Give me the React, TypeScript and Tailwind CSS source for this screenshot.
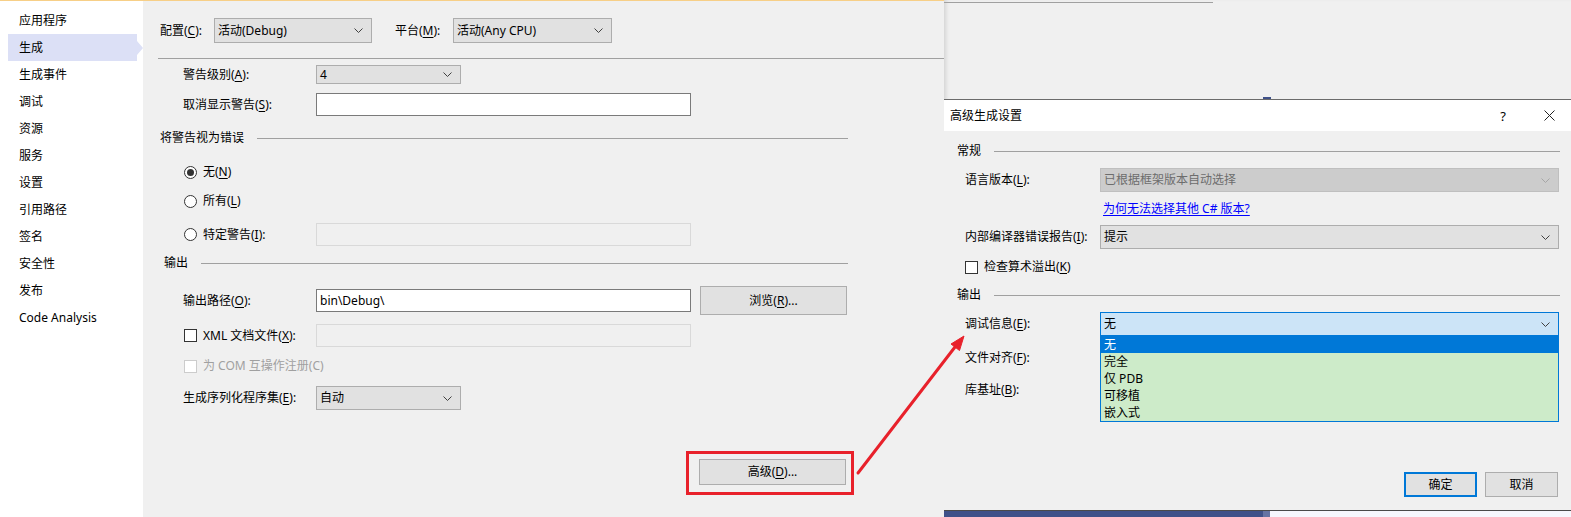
import type { ReactNode } from "react";
import clsx from "clsx";

const navItems = ["应用程序", "生成", "生成事件", "调试", "资源", "服务", "设置", "引用路径", "签名", "安全性", "发布", "Code Analysis"];

const U = ({ children }: { children: ReactNode }) => <span className="underline underline-offset-2">{children}</span>;

function Chevron({ color = "#404040" }: { color?: string }) {
    return (
        <svg width="9" height="5" viewBox="0 0 9 5" className="shrink-0">
            <path d="M0.5 0.5 L4.5 4.5 L8.5 0.5" fill="none" stroke={color} strokeWidth="1" />
        </svg>
    );
}

function Select({ children, className, disabled, focused }: { children?: ReactNode; className?: string; disabled?: boolean; focused?: boolean }) {
    return (
        <div
            className={clsx(
                "flex shrink-0 items-center justify-between border pl-[3px] pr-[8px]",
                disabled ? "border-[#bfbfbf] bg-[#cccccc] text-[#6d6d6d]" : focused ? "border-[#0078d7] bg-[#cce4f7]" : "border-[#adadad] bg-[#e1e1e1]",
                className
            )}
        >
            <span>{children}</span>
            <Chevron color={disabled ? "#a6a6a6" : "#404040"} />
        </div>
    );
}

function Input({ value, disabled, className }: { value?: string; disabled?: boolean; className?: string }) {
    return (
        <div
            className={clsx(
                "flex h-[23px] w-[375px] shrink-0 items-center border pl-[3px]",
                disabled ? "border-[#d9d9d9] bg-[#f0f0f0]" : "border-[#7a7a7a] bg-white",
                className
            )}
        >
            {value}
        </div>
    );
}

function Button({ children, primary, className }: { children: ReactNode; primary?: boolean; className?: string }) {
    return (
        <div
            className={clsx(
                "flex shrink-0 items-center justify-center bg-[#e1e1e1]",
                primary ? "border-2 border-[#0078d7]" : "border border-[#adadad]",
                className
            )}
        >
            {children}
        </div>
    );
}

function Radio({ checked }: { checked?: boolean }) {
    return (
        <div className="flex h-[13px] w-[13px] shrink-0 items-center justify-center rounded-full border border-[#333] bg-white">
            {checked ? <div className="h-[7px] w-[7px] rounded-full bg-[#333]" /> : null}
        </div>
    );
}

function Checkbox({ disabled }: { disabled?: boolean }) {
    return <div className={clsx("h-[13px] w-[13px] shrink-0 border bg-white", disabled ? "border-[#cccccc]" : "border-[#333]")} />;
}

function GroupHeader({ title, className }: { title: string; className?: string }) {
    return (
        <div className={clsx("flex h-4 items-center", className)}>
            <span>{title}</span>
            <div className="ml-[13px] h-px flex-1 bg-[#a0a0a0]" />
        </div>
    );
}

function Sidebar() {
    return (
        <aside className="flex w-[143px] shrink-0 flex-col bg-white pt-[6px]">
            {navItems.map((item) => (
                <div key={item} className="flex h-[27px] items-center pl-[8px]">
                    {item === "生成" ? (
                        <>
                            <div className="flex h-full w-[129px] items-center bg-[#dce0f6] pl-[11px]">{item}</div>
                            <div className="h-0 w-0 border-y-[7px] border-l-[6px] border-y-transparent border-l-[#dce0f6]" />
                        </>
                    ) : (
                        <div className="pl-[11px]">{item}</div>
                    )}
                </div>
            ))}
        </aside>
    );
}

function BuildPage() {
    return (
        <main className="flex w-[801px] shrink-0 flex-col bg-[#f0f0f0]">
            <div className="mt-[17px] flex h-[25px] items-center pl-[17px]">
                <span className="w-[54px]">配置(<U>C</U>):</span>
                <Select className="h-[25px] w-[158px]">活动(Debug)</Select>
                <span className="ml-[23px] w-[58px]">平台(<U>M</U>):</span>
                <Select className="h-[25px] w-[159px]">活动(Any CPU)</Select>
            </div>
            <div className="ml-[15px] mt-[15px] h-px bg-[#a0a0a0]" />

            <div className="flex flex-col pl-[40px]">
                <div className="mt-[6px] flex h-[19px] items-center">
                    <span className="w-[133px]">警告级别(<U>A</U>):</span>
                    <Select className="h-[19px] w-[145px]">4</Select>
                </div>
                <div className="mt-[9px] flex h-[23px] items-center">
                    <span className="w-[133px]">取消显示警告(<U>S</U>):</span>
                    <Input />
                </div>
            </div>

            <GroupHeader title="将警告视为错误" className="mt-[14px] pl-[17px] pr-[96px]" />

            <div className="flex flex-col pl-[41px]">
                <div className="mt-[18px] flex h-4 items-center gap-[6px]">
                    <Radio checked />
                    <span>无(<U>N</U>)</span>
                </div>
                <div className="mt-[13px] flex h-4 items-center gap-[6px]">
                    <Radio />
                    <span>所有(<U>L</U>)</span>
                </div>
                <div className="mt-[14px] flex h-[23px] items-center">
                    <div className="flex w-[132px] items-center gap-[6px]">
                        <Radio />
                        <span>特定警告(<U>I</U>):</span>
                    </div>
                    <Input disabled />
                </div>
            </div>

            <GroupHeader title="输出" className="mt-[9px] pl-[21px] pr-[96px]" />

            <div className="flex flex-col pl-[40px]">
                <div className="mt-[15px] flex h-[29px] items-center">
                    <span className="w-[133px]">输出路径(<U>O</U>):</span>
                    <Input value="bin\Debug\" />
                    <Button className="ml-[9px] h-[29px] w-[147px]">
                        浏览(<U>R</U>)...
                    </Button>
                </div>
                <div className="mt-[9px] flex h-[23px] items-center">
                    <div className="flex w-[133px] items-center gap-[6px] pl-px">
                        <Checkbox />
                        <span>XML 文档文件(<U>X</U>):</span>
                    </div>
                    <Input disabled />
                </div>
                <div className="mt-[11px] flex h-4 items-center gap-[6px] pl-px text-[#a0a0a0]">
                    <Checkbox disabled />
                    <span>为 COM 互操作注册(C)</span>
                </div>
                <div className="mt-[12px] flex h-[24px] items-center">
                    <span className="w-[133px]">生成序列化程序集(<U>E</U>):</span>
                    <Select className="h-[24px] w-[145px]">自动</Select>
                </div>
            </div>

            <div className="ml-[543px] mt-[41px] w-[168px] border-[3px] border-[#e8212b] pb-[7px] pl-[10px] pt-[5px]">
                <Button className="h-[26px] w-[147px]">
                    高级(<U>D</U>)...
                </Button>
            </div>
        </main>
    );
}

function AdvancedDialog() {
    return (
        <section className="flex h-[411px] flex-col border-t border-[#6b6b6b]">
            <div className="flex h-[31px] items-center bg-white pl-[6px] pr-[16px]">
                <span className="flex-1">高级生成设置</span>
                <span className="mr-[38px] text-[13px]">?</span>
                <svg width="11" height="11" viewBox="0 0 11 11">
                    <path d="M0.5 0.5 L10.5 10.5 M10.5 0.5 L0.5 10.5" stroke="#222" strokeWidth="1" />
                </svg>
            </div>
            <div className="flex flex-1 flex-col bg-[#f0f0f0]">
                <GroupHeader title="常规" className="mt-[12px] pl-[13px] pr-[11px]" />
                <div className="flex flex-col pl-[21px] pr-[12px]">
                    <div className="mt-[9px] flex h-[24px] items-center">
                        <span className="w-[135px] shrink-0">语言版本(<U>L</U>):</span>
                        <Select disabled className="h-[24px] flex-1">已根据框架版本自动选择</Select>
                    </div>
                    <div className="mt-[9px] flex h-4 items-center pl-[138px]">
                        <span className="text-[#0000ff] underline underline-offset-2">为何无法选择其他 C# 版本?</span>
                    </div>
                    <div className="mt-[8px] flex h-[24px] items-center">
                        <span className="w-[135px] shrink-0">内部编译器错误报告(<U>I</U>):</span>
                        <Select className="h-[24px] flex-1">提示</Select>
                    </div>
                    <div className="mt-[10px] flex h-4 items-center gap-[6px]">
                        <Checkbox />
                        <span>检查算术溢出(<U>K</U>)</span>
                    </div>
                </div>
                <GroupHeader title="输出" className="mt-[12px] pl-[13px] pr-[11px]" />
                <div className="flex flex-col pl-[21px] pr-[12px]">
                    <div className="mt-[9px] flex h-[24px] items-center">
                        <span className="w-[135px] shrink-0">调试信息(<U>E</U>):</span>
                        <div className="relative flex-1">
                            <Select focused className="h-[24px] w-full">无</Select>
                            <ul className="absolute left-0 right-0 top-[24px] z-10 border border-t-0 border-[#0078d7] bg-[#cdebc9]">
                                {["无", "完全", "仅 PDB", "可移植", "嵌入式"].map((item, i) => (
                                    <li key={item} className={clsx("flex h-[17px] items-center pl-[3px]", i === 0 && "bg-[#0078d7] text-white")}>
                                        {item}
                                    </li>
                                ))}
                            </ul>
                        </div>
                    </div>
                    <div className="mt-[10px] flex h-[24px] items-center">
                        <span className="w-[135px] shrink-0">文件对齐(<U>F</U>):</span>
                        <Select className="h-[24px] flex-1" />
                    </div>
                    <div className="mt-[8px] flex h-[24px] items-center">
                        <span className="w-[135px] shrink-0">库基址(<U>B</U>):</span>
                        <div className="h-[24px] flex-1 border border-[#7a7a7a] bg-white" />
                    </div>
                </div>
                <div className="mt-[70px] flex justify-end gap-[8px] pr-[13px]">
                    <Button primary className="h-[25px] w-[73px]">确定</Button>
                    <Button className="h-[25px] w-[73px]">取消</Button>
                </div>
            </div>
        </section>
    );
}

export default function App() {
    return (
        <div className="relative flex h-[517px] w-[1571px] overflow-hidden bg-[#f0f0f0] font-['Noto_Sans','Noto_Sans_CJK_SC',sans-serif] text-[12px] leading-4 text-black">
            <div className="flex w-[944px] shrink-0 flex-col">
                <div className="h-px bg-[#f7cf87]" />
                <div className="flex flex-1">
                    <Sidebar />
                    <BuildPage />
                </div>
            </div>

            <div className="flex flex-1 flex-col shadow-[inset_4px_0_4px_-2px_rgba(0,0,0,0.12)]">
                <div className="flex h-[99px] flex-col">
                    <div className="mt-[2px] h-px w-[269px] bg-[#a0a0a0]" />
                    <div className="flex-1" />
                    <div className="ml-[319px] h-[2px] w-[8px] bg-[#3f5189]" />
                </div>
                <AdvancedDialog />
                <div className="flex h-[7px] border-t border-[#4a4a4a]">
                    <div className="w-[319px] bg-[#3f5189]" />
                    <div className="w-[7px] bg-[#6673a3]" />
                    <div className="flex-1 bg-[#f6f7fd]" />
                </div>
            </div>

            <svg className="pointer-events-none absolute left-0 top-0" width="1571" height="517" viewBox="0 0 1571 517">
                <line x1="858" y1="473" x2="955" y2="347" stroke="#e8212b" strokeWidth="3" strokeLinecap="round" />
                <polygon points="964,336 959.5,350.5 951,344" fill="#e8212b" stroke="#e8212b" strokeWidth="1" strokeLinejoin="round" />
            </svg>
        </div>
    );
}
